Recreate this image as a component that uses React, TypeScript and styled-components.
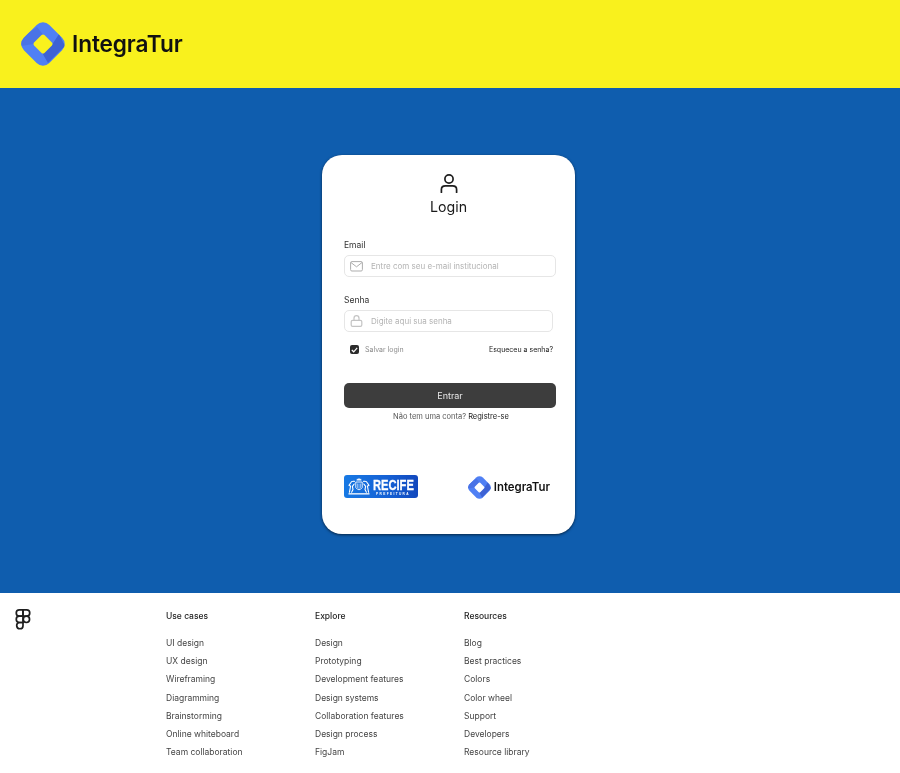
import React from "react";
import styled, { createGlobalStyle } from "styled-components";

const Global = createGlobalStyle`
  html, body { margin: 0; padding: 0; background: #fff; }
  body { font-family: Inter, "Liberation Sans", sans-serif; overflow: hidden; }
  * { box-sizing: border-box; }
`;

const Page = styled.div`
  width: 900px;
  height: 773px;
  overflow: hidden;
  display: flex;
  flex-direction: column;
  will-change: transform;
`;

const Header = styled.header`
  height: 88px;
  flex: none;
  background: #f9f11d;
  display: flex;
  align-items: center;
  padding: 0 0 0 21px;
`;

const Brand = styled.div<{ $gap: number; $top: number }>`
  display: flex;
  align-items: center;
  gap: ${(p) => p.$gap}px;
  padding-top: ${(p) => p.$top}px;
`;

const BrandName = styled.span<{ $size: number; $spacing: number }>`
  font-family: Inter, sans-serif;
  font-weight: 600;
  font-size: ${(p) => p.$size}px;
  letter-spacing: ${(p) => p.$spacing}px;
  color: #111;
  line-height: 1;
`;

const Main = styled.main`
  height: 505px;
  flex: none;
  background: #0f5dae;
  padding: 67px 0 0 322px;
`;

const Card = styled.section`
  width: 253px;
  height: 379px;
  background: #fff;
  border-radius: 20px;
  box-shadow: 0 1px 3px rgba(0, 0, 0, 0.6);
  padding: 18px 19px 0 22px;
  display: flex;
  flex-direction: column;
`;

const CardHead = styled.div`
  display: flex;
  flex-direction: column;
  align-items: center;
  margin-right: 3px;
`;

const Title = styled.h1`
  margin: 5px 0 0;
  font-size: 14.2px;
  line-height: 18px;
  font-weight: 400;
  color: #1a1a1a;
`;

const FieldLabel = styled.label<{ $top: number }>`
  display: block;
  margin-top: ${(p) => p.$top}px;
  font-size: 8.5px;
  line-height: 11px;
  color: #333;
`;

const InputBox = styled.div<{ $width: number }>`
  width: ${(p) => p.$width}px;
  height: 22px;
  margin-top: 4px;
  border: 1px solid #e6e6e6;
  border-radius: 5px;
  display: flex;
  align-items: center;
  padding-left: 5px;
  gap: 8px;
  background: #fff;
`;

const Placeholder = styled.span`
  font-size: 8px;
  color: #b3b3b3;
  line-height: 1;
`;

const OptionsRow = styled.div`
  width: 209px;
  display: flex;
  align-items: center;
  justify-content: space-between;
  margin-top: 13px;
  padding-left: 6px;
`;

const SaveLogin = styled.div`
  display: flex;
  align-items: center;
  gap: 6px;
  font-size: 7px;
  color: #8c8c8c;
`;

const CheckBox = styled.span`
  width: 9px;
  height: 9px;
  border-radius: 2px;
  background: #2c2c2c;
  display: flex;
  align-items: center;
  justify-content: center;
`;

const ForgotLink = styled.a`
  font-size: 7px;
  color: #1a1a1a;
`;

const SubmitButton = styled.button`
  width: 212px;
  height: 25px;
  margin-top: 28.5px;
  border: 0;
  border-radius: 5px;
  background: #3d3d3d;
  color: #e6e6e6;
  font-family: Inter, sans-serif;
  font-size: 9px;
  padding: 0;
`;

const RegisterLine = styled.p`
  width: 214px;
  margin: 4px 0 0;
  text-align: center;
  font-size: 7.5px;
  line-height: 9px;
  color: #555;
`;

const RegisterLink = styled.a`
  color: #1a1a1a;
`;

const Logos = styled.div`
  margin-top: 53.5px;
  width: 206px;
  display: flex;
  align-items: center;
  justify-content: space-between;
`;

const RecifeBadge = styled.div`
  width: 74px;
  height: 23px;
  border-radius: 3px;
  background: linear-gradient(90deg, #1779e4 0%, #1560d4 60%, #1248bd 100%);
  display: flex;
  align-items: center;
  padding: 0 3px 0 2px;
  gap: 0;
`;

const RecifeText = styled.div`
  width: 42px;
  display: flex;
  flex-direction: column;
  align-items: center;
  color: #fff;
  font-family: "Liberation Sans", sans-serif;
  font-weight: 700;
`;

const RecifeName = styled.span`
  font-size: 15.5px;
  line-height: 14px;
  white-space: nowrap;
  transform: scaleX(0.72);
  -webkit-text-stroke: 0.3px #fff;
`;

const RecifeSub = styled.span`
  font-size: 3.2px;
  line-height: 4px;
  letter-spacing: 1.35px;
`;

const Footer = styled.footer`
  flex: none;
  height: 180px;
  background: #fff;
  display: flex;
  padding: 16px 0 0 15px;
`;

const FigmaMark = styled.div`
  width: 151px;
  flex: none;
`;

const FooterColumn = styled.nav`
  width: 149px;
  flex: none;
`;

const ColumnTitle = styled.h3`
  margin: 0 0 11px;
  padding-top: 1px;
  font-size: 8.5px;
  line-height: 13px;
  font-weight: 500;
  color: #1e1e1e;
`;

const FooterLink = styled.a`
  display: block;
  font-size: 8.5px;
  line-height: 18.17px;
  color: #444;
`;

const LogoIcon = ({ size, hole, id }: { size: number; hole: string; id: string }) => (
  <svg width={size} height={size} viewBox="0 0 44 44" fill="none">
    <defs>
      <clipPath id={id}>
        <rect x="4" y="4" width="36" height="36" rx="9" transform="rotate(45 22 22)" />
      </clipPath>
    </defs>
    <g clipPath={`url(#${id})`}>
      <rect width="44" height="44" fill="#5080f4" />
      <polygon points="0,24 12.5,22 22,12.5 16,5 0,16" fill="#4a73e6" />
      <polygon points="31.5,22 38,12 44,24 27,41 21.5,31.5" fill="#3d62d4" />
    </g>
    <rect x="14.7" y="14.7" width="14.6" height="14.6" rx="2" transform="rotate(45 22 22)" fill={hole} />
  </svg>
);

const UserIcon = () => (
  <svg width="20" height="20" viewBox="0 0 20 20" fill="none" stroke="#1e1e1e" strokeWidth="1.7" strokeLinecap="round">
    <circle cx="10" cy="6" r="4.1" />
    <path d="M2.4 19.4 V16.5 Q2.4 12.9 6.4 12.9 H13.6 Q17.6 12.9 17.6 16.5 V19.4" />
  </svg>
);

const MailIcon = () => (
  <svg width="13" height="11" viewBox="0 0 13 11" fill="none" stroke="#adadad" strokeWidth="1">
    <rect x="0.6" y="0.6" width="11.8" height="9.4" rx="1.3" />
    <path d="M0.8 1.4 L6.5 5.8 L12.2 1.4" />
  </svg>
);

const LockIcon = () => (
  <svg width="13" height="12" viewBox="0 0 13 12" fill="none" stroke="#c4c4c4" strokeWidth="1.2">
    <rect x="1.2" y="5.4" width="10.6" height="6" rx="1.4" />
    <path d="M4 5.2 V3.2 A2.5 2.5 0 0 1 9 3.2 V5.2" />
  </svg>
);

const CheckIcon = () => (
  <svg width="7" height="6" viewBox="0 0 7 6" fill="none" stroke="#fff" strokeWidth="1.2">
    <path d="M0.8 3 L2.7 4.8 L6.2 0.9" />
  </svg>
);

const CrestIcon = () => (
  <svg width="26" height="19" viewBox="0 0 26 19" fill="none" style={{ flex: "none" }}>
    <path d="M10.5 3.4 L11 1.4 L12 2.4 L13 0.8 L14 2.4 L15 1.4 L15.5 3.4 Z" fill="#fff" />
    <path d="M9.8 5 H16.2 V10.5 Q13 15 9.8 10.5 Z" stroke="#fff" strokeWidth="0.9" />
    <path d="M11.5 6.5 V11 M13 6.5 V12 M14.5 6.5 V11" stroke="#fff" strokeWidth="0.5" />
    <g stroke="#fff" strokeWidth="1.1" strokeLinecap="round" strokeLinejoin="round">
      <path d="M8.4 4.4 Q5.6 3.6 4.6 6 L3 8.4 L4.6 9 L3.4 15.3" />
      <path d="M8.2 7 L6.4 9.4 L7 12.6 L5.6 15.3" />
      <path d="M17.6 4.4 Q20.4 3.6 21.4 6 L23 8.4 L21.4 9 L22.6 15.3" />
      <path d="M17.8 7 L19.6 9.4 L19 12.6 L20.4 15.3" />
    </g>
    <path d="M2.5 16.2 H23.5 V17.5 H2.5 Z" fill="#fff" />
  </svg>
);

const FigmaIcon = () => (
  <svg width="16" height="21" viewBox="0 0 16 21" fill="none" stroke="#1e1e1e" strokeWidth="1.7">
    <path d="M8 .9 H4.4 a3.15 3.15 0 0 0 0 6.3 H8 Z" />
    <path d="M8 .9 h3.6 a3.15 3.15 0 0 1 0 6.3 H8 Z" />
    <path d="M8 7.2 H4.4 a3.15 3.15 0 0 0 0 6.3 H8 Z" />
    <circle cx="11.4" cy="10.35" r="3.15" />
    <path d="M8 13.5 H4.4 a3.15 3.15 0 1 0 3.6 3.15 Z" />
  </svg>
);

const columns = [
  { title: "Use cases", links: ["UI design", "UX design", "Wireframing", "Diagramming", "Brainstorming", "Online whiteboard", "Team collaboration"] },
  { title: "Explore", links: ["Design", "Prototyping", "Development features", "Design systems", "Collaboration features", "Design process", "FigJam"] },
  { title: "Resources", links: ["Blog", "Best practices", "Colors", "Color wheel", "Support", "Developers", "Resource library"] },
];

export default function App() {
  return (
    <Page>
      <Global />
      <Header>
        <Brand $gap={7} $top={0}>
          <LogoIcon size={44} hole="#f9f11d" id="logo-large" />
          <BrandName $size={22.6} $spacing={-0.1}>IntegraTur</BrandName>
        </Brand>
      </Header>
      <Main>
        <Card>
          <CardHead>
            <UserIcon />
            <Title>Login</Title>
          </CardHead>
          <FieldLabel $top={24}>Email</FieldLabel>
          <InputBox $width={212}>
            <MailIcon />
            <Placeholder>Entre com seu e-mail institucional</Placeholder>
          </InputBox>
          <FieldLabel $top={18}>Senha</FieldLabel>
          <InputBox $width={209}>
            <LockIcon />
            <Placeholder>Digite aqui sua senha</Placeholder>
          </InputBox>
          <OptionsRow>
            <SaveLogin>
              <CheckBox><CheckIcon /></CheckBox>
              Salvar login
            </SaveLogin>
            <ForgotLink>Esqueceu a senha?</ForgotLink>
          </OptionsRow>
          <SubmitButton>Entrar</SubmitButton>
          <RegisterLine>
            Não tem uma conta? <RegisterLink>Registre-se</RegisterLink>
          </RegisterLine>
          <Logos>
            <RecifeBadge>
              <CrestIcon />
              <RecifeText>
                <RecifeName>RECIFE</RecifeName>
                <RecifeSub>PREFEITURA</RecifeSub>
              </RecifeText>
            </RecifeBadge>
            <Brand $gap={3} $top={2}>
              <LogoIcon size={23} hole="#ffffff" id="logo-small" />
              <BrandName $size={11.4} $spacing={0}>IntegraTur</BrandName>
            </Brand>
          </Logos>
        </Card>
      </Main>
      <Footer>
        <FigmaMark><FigmaIcon /></FigmaMark>
        {columns.map((c) => (
          <FooterColumn key={c.title}>
            <ColumnTitle>{c.title}</ColumnTitle>
            {c.links.map((l) => (
              <FooterLink key={l}>{l}</FooterLink>
            ))}
          </FooterColumn>
        ))}
      </Footer>
    </Page>
  );
}
